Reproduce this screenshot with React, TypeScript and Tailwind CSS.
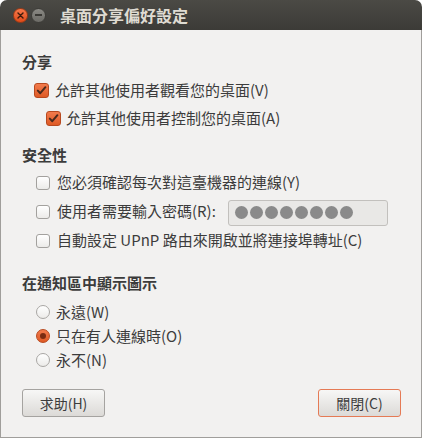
import React from "react";

const font = { fontFamily: '"Noto Sans CJK TC", "Noto Sans", sans-serif' };

function Check({ checked }: { checked: boolean }) {
  if (checked) {
    return (
      <div className="w-[15px] h-[15px] rounded-[3px] border border-[#b8491f] bg-gradient-to-b from-[#f27b4c] to-[#df5a24] flex items-center justify-center shrink-0">
        <svg width="11" height="11" viewBox="0 0 11 11">
          <path d="M1.8 5.6 L4.3 8.2 L9.4 2.2" fill="none" stroke="#4a2a1c" strokeWidth="2" strokeLinecap="round" strokeLinejoin="round" />
        </svg>
      </div>
    );
  }
  return (
    <div className="w-[14px] h-[14px] rounded-[3px] border border-[#a3a19e] bg-gradient-to-b from-[#ffffff] to-[#ecebe9] shrink-0" />
  );
}

function Radio({ checked }: { checked: boolean }) {
  if (checked) {
    return (
      <div className="w-[14px] h-[14px] rounded-full border border-[#b8491f] bg-gradient-to-b from-[#f27b4c] to-[#df5a24] flex items-center justify-center shrink-0">
        <div className="w-[6px] h-[6px] rounded-full bg-[#7a2c12]" />
      </div>
    );
  }
  return (
    <div className="w-[14px] h-[14px] rounded-full border border-[#a9a7a4] bg-gradient-to-b from-[#ffffff] to-[#ecebe9] shrink-0" />
  );
}

export default function App() {
  return (
    <div className="w-[422px] h-[438px] bg-white" style={font}>
      <div className="w-[422px] h-[438px] flex flex-col rounded-t-[7px] overflow-hidden">
        {/* Title bar */}
        <div className="h-[30px] shrink-0 bg-gradient-to-b from-[#4b4a45] to-[#3c3b37] flex items-center pl-[13px]">
          <div className="w-[15px] h-[15px] rounded-full bg-gradient-to-b from-[#f7784a] to-[#df4a16] border border-[#9d3a15] flex items-center justify-center">
            <svg width="7" height="7" viewBox="0 0 7 7">
              <path d="M1 1 L6 6 M6 1 L1 6" stroke="#3c1a0c" strokeWidth="1.4" strokeLinecap="round" />
            </svg>
          </div>
          <div className="ml-[3px] w-[15px] h-[15px] rounded-full bg-gradient-to-b from-[#8a8984] to-[#6c6b66] border border-[#3e3d39] flex items-center justify-center">
            <div className="w-[7px] h-[1.5px] bg-[#3a3935]" />
          </div>
          <div className="ml-[14px] text-[16px] font-bold text-[#dfdbd2] leading-none">桌面分享偏好設定</div>
        </div>
        {/* Body */}
        <div className="flex-1 bg-[#f2f1f0] border-x border-b border-[#a09e9b] flex flex-col pl-[21px] pr-[20px] text-[15px] text-[#3c3c3c]">
          <div className="mt-[22px] h-[20px] flex items-center font-bold">分享</div>
          <div className="mt-[4px] h-[28px] flex items-center pl-[12px] gap-[6px]">
            <Check checked />
            <span>允許其他使用者觀看您的桌面(V)</span>
          </div>
          <div className="h-[28px] flex items-center pl-[24px] gap-[5px]">
            <Check checked />
            <span>允許其他使用者控制您的桌面(A)</span>
          </div>

          <div className="mt-[13px] h-[20px] flex items-center font-bold">安全性</div>
          <div className="mt-[3px] h-[29px] flex items-center pl-[14px] gap-[7px]">
            <Check checked={false} />
            <span>您必須確認每次對這臺機器的連線(Y)</span>
          </div>
          <div className="h-[29px] flex items-center pl-[14px]">
            <Check checked={false} />
            <span className="ml-[7px]">使用者需要輸入密碼(R):</span>
            <div className="ml-auto mr-[13px] mt-[2px] w-[160px] h-[26px] rounded-[3px] border border-[#c2c0bd] bg-[#e9e8e6] flex items-center pl-[6px] gap-[2px]">
              {Array.from({ length: 8 }).map((_, i) => (
                <div key={i} className="w-[13px] h-[13px] rounded-full bg-[#8a8a8a]" />
              ))}
            </div>
          </div>
          <div className="h-[29px] flex items-center pl-[14px] gap-[7px]">
            <Check checked={false} />
            <span>自動設定 UPnP 路由來開啟並將連接埠轉址(C)</span>
          </div>

          <div className="mt-[18px] h-[20px] flex items-center font-bold">在通知區中顯示圖示</div>
          <div className="mt-[7px] h-[24px] flex items-center pl-[14px] gap-[6px]">
            <Radio checked={false} />
            <span>永遠(W)</span>
          </div>
          <div className="h-[24px] flex items-center pl-[14px] gap-[6px]">
            <Radio checked />
            <span>只在有人連線時(O)</span>
          </div>
          <div className="h-[24px] flex items-center pl-[14px] gap-[6px]">
            <Radio checked={false} />
            <span>永不(N)</span>
          </div>

          <div className="mt-[17px] flex justify-between">
            <div className="w-[83px] h-[28px] rounded-[3px] border border-[#a5a3a0] bg-gradient-to-b from-[#f7f7f6] to-[#dcdad7] flex items-center justify-center text-[14px]">
              求助(H)
            </div>
            <div className="w-[83px] h-[28px] rounded-[3px] border border-[#e57a55] bg-gradient-to-b from-[#f7f7f6] to-[#dcdad7] flex items-center justify-center text-[14px]">
              關閉(C)
            </div>
          </div>
        </div>
      </div>
    </div>
  );
}
